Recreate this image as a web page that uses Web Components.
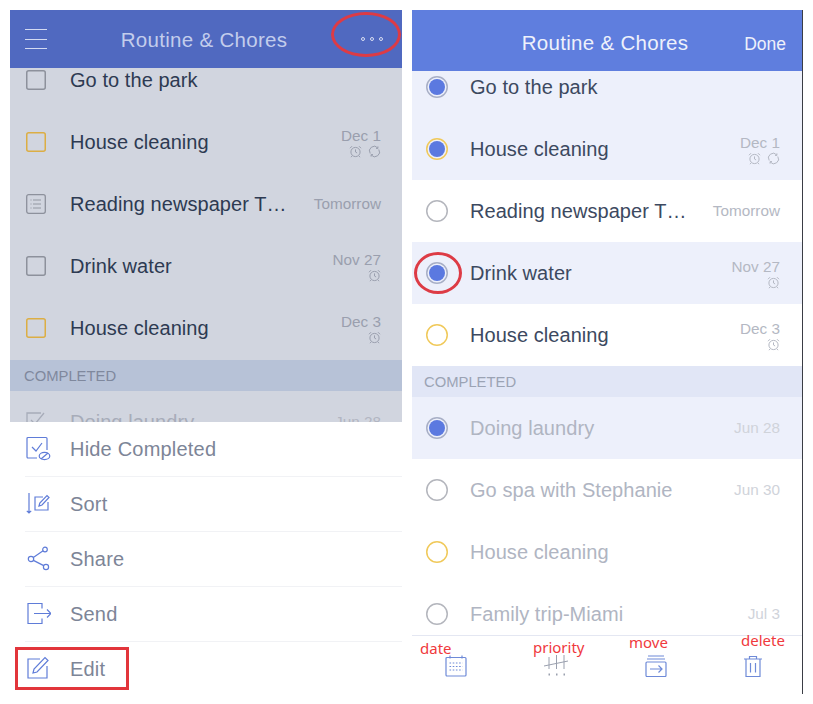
<!DOCTYPE html>
<html>
<head>
<meta charset="utf-8">
<title>Routine &amp; Chores</title>
<style>
  html, body { margin: 0; background: #fff; }
  body { width: 813px; height: 704px; overflow: hidden; font-family: "Liberation Sans", Arial, sans-serif; }
</style>
</head>
<body>
<two-screens>
  <phone-screen slot="left" class="dimmed">
    <nav-bar slot="bar" heading="Routine &amp; Chores" tall="58" drop="2" tone="#5069c0" title-color="#c3cdec">
      <menu-lines slot="start"></menu-lines>
      <more-dots slot="end"></more-dots>
    </nav-bar>
    <task-list slot="body" offset="-19">
      <task-row mark="box" label="Go to the park"></task-row>
      <task-row mark="box-yellow" label="House cleaning" date="Dec 1" icons="alarm repeat"></task-row>
      <task-row mark="note" label="Reading newspaper T…" date="Tomorrow"></task-row>
      <task-row mark="box" label="Drink water" date="Nov 27" icons="alarm"></task-row>
      <task-row mark="box-yellow" label="House cleaning" date="Dec 3" icons="alarm"></task-row>
      <section-head>COMPLETED</section-head>
      <task-row mark="check" faded label="Doing laundry" date="Jun 28"></task-row>
    </task-list>
    <action-sheet slot="foot">
      <sheet-item icon="hide">Hide Completed</sheet-item>
      <sheet-item icon="sort">Sort</sheet-item>
      <sheet-item icon="share">Share</sheet-item>
      <sheet-item icon="send">Send</sheet-item>
      <sheet-item icon="edit" last>Edit</sheet-item>
    </action-sheet>
    <red-mark slot="over" shape="ellipse" x="321" y="2" w="70" h="45"></red-mark>
    <red-mark slot="over" shape="rect" x="5" y="637" w="114" h="43"></red-mark>
  </phone-screen>

  <phone-screen slot="right" class="edit">
    <nav-bar slot="bar" heading="Routine &amp; Chores" tall="61" drop="5" tone="#5f7ede" title-color="#eef1fb">
      <span slot="start"></span>
      <done-link slot="end">Done</done-link>
    </nav-bar>
    <task-list slot="body" offset="-15">
      <task-row mark="dot" picked label="Go to the park"></task-row>
      <task-row mark="dot-yellow" picked label="House cleaning" date="Dec 1" icons="alarm repeat"></task-row>
      <task-row mark="ring" label="Reading newspaper T…" date="Tomorrow"></task-row>
      <task-row mark="dot" picked label="Drink water" date="Nov 27" icons="alarm"></task-row>
      <task-row mark="ring-yellow" label="House cleaning" date="Dec 3" icons="alarm"></task-row>
      <section-head>COMPLETED</section-head>
      <task-row mark="dot" picked faded label="Doing laundry" date="Jun 28"></task-row>
      <task-row mark="ring" faded label="Go spa with Stephanie" date="Jun 30"></task-row>
      <task-row mark="ring-yellow" faded label="House cleaning"></task-row>
      <task-row mark="ring" faded label="Family trip-Miami" date="Jul 3"></task-row>
    </task-list>
    <tool-bar slot="foot">
      <tool-item icon="calendar" note="date" dx="-25" dy="-16"></tool-item>
      <tool-item icon="priority" note="priority" dx="-10" dy="-17"></tool-item>
      <tool-item icon="move" note="move" dx="-16" dy="-22"></tool-item>
      <tool-item icon="trash" note="delete" dx="-2" dy="-24"></tool-item>
    </tool-bar>
    <red-mark slot="over" shape="ellipse" x="2" y="242" w="48" h="42"></red-mark>
  </phone-screen>
</two-screens>

<script>
// Iconos de la pantalla, todos dibujados a mano con trazos finos
const ICONS = {
  alarm: `<svg width="13" height="13" viewBox="0 0 13 13" fill="none" stroke="currentColor" stroke-width="1"><circle cx="6.5" cy="7" r="4.6"/><path d="M6.5 4.4V7l1.6 1M1 3.2 3 1.2M12 3.2 10 1.2M3 11 2 12.2M10 11l1 1.2"/></svg>`,
  repeat: `<svg width="13" height="13" viewBox="0 0 13 13" fill="none" stroke="currentColor" stroke-width="1"><path d="M2.200 8.500A4.700 4.700 0 0 1 9.800 3M10.800 4.500A4.700 4.700 0 0 1 3.200 10"/><path d="M9.900 1.400v2H8M3.100 11.600v-2H5"/></svg>`,
  hide: `<svg width="26" height="26" viewBox="0 0 26 26" fill="none" stroke="currentColor" stroke-width="1.2"><path d="M12 22H3a1 1 0 0 1-1-1V2.500a1 1 0 0 1 1-1h18a1 1 0 0 1 1 1V14"/><path d="m7 11 4 4 6-8"/><ellipse cx="19.500" cy="20" rx="5.300" ry="3.600"/><path d="m16 23 7-6"/></svg>`,
  sort: `<svg width="26" height="26" viewBox="0 0 26 26" fill="none" stroke="currentColor" stroke-width="1.2"><path d="M4 2v20M1.800 19.800 4 22l2.200-2.200"/><path d="M18 6h-8v13h13v-8"/><path d="m14 15 .8-3L22 4.500l2 2-7 7.500z"/></svg>`,
  share: `<svg width="26" height="26" viewBox="0 0 26 26" fill="none" stroke="currentColor" stroke-width="1.2"><circle cx="6" cy="13" r="2.700"/><circle cx="20" cy="3.500" r="2.300"/><circle cx="21" cy="21" r="2.600"/><path d="m8.300 11.500 9.800-6.700M8.400 14.400l10.300 5.200"/></svg>`,
  send: `<svg width="26" height="26" viewBox="0 0 26 26" fill="none" stroke="currentColor" stroke-width="1.2"><path d="M17 7.500V2.500H3v20h14v-5"/><path d="M9 12.500h17M22 8.500l4 4-4 4"/></svg>`,
  edit: `<svg width="26" height="26" viewBox="0 0 26 26" fill="none" stroke="currentColor" stroke-width="1.2"><path d="M15 3H3v19h19V10"/><path d="m8 17 1-4L20 1.500l3 3L12 16z"/></svg>`,
  calendar: `<svg width="22" height="22" viewBox="0 0 22 22" fill="none" stroke="currentColor" stroke-width="1.200"><rect x="1" y="2.500" width="20" height="18.500" rx="1"/><path d="M5 .500v3M17 .500v3"/><path stroke-dasharray="1.600 1.600" d="M4.500 8h13M4.500 11.500h13M4.500 15h13"/></svg>`,
  priority: `<svg width="26" height="22" viewBox="0 0 26 22" fill="none" stroke="#9aa0ae" stroke-width="1"><path d="M1 11 25 6"/><path d="M6 2v12M13.500 0v14M21 0v14"/><path stroke-dasharray="1.500 6" stroke-width="2" d="M5.500 19.500h18"/></svg>`,
  move: `<svg width="22" height="22" viewBox="0 0 22 22" fill="none" stroke="currentColor" stroke-width="1.200"><rect x="1" y="7" width="20" height="14.500" rx="1"/><path d="M3 1h16M2 4h18"/><path d="M5 14h12M13.500 10.500 17 14l-3.500 3.500"/></svg>`,
  trash: `<svg width="20" height="22" viewBox="0 0 20 22" fill="none" stroke="currentColor" stroke-width="1.200"><path d="M1 4h18M3 4v17.500h14V4M6.500 4V1.500h7V4M7.500 8v9.500M12.500 8v9.500"/></svg>`
};

class TwoScreens extends HTMLElement {
  constructor() {
    super();
    this.attachShadow({ mode: "open" }).innerHTML = `
      <style>
        :host { display: flex; gap: 10px; padding: 10px 0 0 10px; height: 694px; box-sizing: content-box; }
        ::slotted([slot="left"]) { width: 392px; height: 694px; }
        ::slotted([slot="right"]) { width: 390px; height: 684px; border-right: 1px solid #3a3d45; }
      </style>
      <slot name="left"></slot><slot name="right"></slot>`;
  }
}

class PhoneScreen extends HTMLElement {
  constructor() {
    super();
    this.attachShadow({ mode: "open" }).innerHTML = `
      <style>
        :host { display: flex; flex-direction: column; position: relative; }
        :host(.dimmed) {
          --row-bg: #d1d5df; --row-picked: #d1d5df; --head-bg: #b7c2d7; --head-ink: #7f889d;
          --ink: #2d3a52; --ink-faded: #a7acb9; --date: #9a9fae; --date-faded: #b2b6c2;
          --head-gap: 1px; --head-pad: 14px; --box-yellow: #dcae44;
        }
        :host(.edit) {
          --row-bg: #ffffff; --row-picked: #edf0fb; --head-bg: #e1e6f6; --head-ink: #9ba3b4;
          --ink: #3c4960; --ink-faded: #b0b5c2; --date: #b4b8c3; --date-faded: #d0d3da;
          --head-gap: 0; --head-pad: 12px;
        }
      </style>
      <slot name="bar"></slot><slot name="body"></slot><slot name="foot"></slot><slot name="over"></slot>`;
  }
}

class NavBar extends HTMLElement {
  constructor() {
    super();
    this.attachShadow({ mode: "open" });
  }
  connectedCallback() {
    this.shadowRoot.innerHTML = `
      <style>
        :host {
          display: grid; grid-template-columns: 1fr auto 1fr; align-items: center; flex: none;
          height: ${this.getAttribute("tall")}px; padding: 0 16px 0 15px; box-sizing: border-box;
          background: ${this.getAttribute("tone")}; position: relative; z-index: 1;
        }
        h1 { margin: ${this.getAttribute("drop")}px 3px 0 0; font: 400 20.5px "Liberation Sans", Arial, sans-serif; letter-spacing: .3px;
             color: ${this.getAttribute("title-color")}; white-space: nowrap; }
        .end { justify-self: end; }
      </style>
      <div><slot name="start"></slot></div>
      <h1>${this.getAttribute("heading").replace("&", "&amp;")}</h1>
      <div class="end"><slot name="end"></slot></div>`;
  }
}

class MenuLines extends HTMLElement {
  constructor() {
    super();
    this.attachShadow({ mode: "open" }).innerHTML = `
      <style>
        :host { display: flex; flex-direction: column; gap: 8.500px; width: 22px; }
        i { display: block; height: 1px; background: #d3daf2; }
      </style>
      <i></i><i></i><i></i>`;
  }
}

class MoreDots extends HTMLElement {
  constructor() {
    super();
    this.attachShadow({ mode: "open" }).innerHTML = `
      <style>
        :host { display: flex; gap: 4.500px; margin-right: 3px; align-items: center; }
        i { width: 2.500px; height: 2.500px; border: 1px solid #d9def2; border-radius: 50%; box-sizing: content-box; }
      </style>
      <i></i><i></i><i></i>`;
  }
}

class DoneLink extends HTMLElement {
  constructor() {
    super();
    this.attachShadow({ mode: "open" }).innerHTML = `
      <style>:host { display: block; font-size: 17.500px; color: #eef1fb; margin-top: 7px; }</style><slot></slot>`;
  }
}

class TaskList extends HTMLElement {
  constructor() {
    super();
    this.attachShadow({ mode: "open" });
  }
  connectedCallback() {
    this.shadowRoot.innerHTML = `
      <style>
        :host { display: block; flex: 1; min-height: 0; overflow: hidden; background: var(--row-bg); }
        .inner { margin-top: ${this.getAttribute("offset")}px; }
      </style>
      <div class="inner"><slot></slot></div>`;
  }
}

class SectionHead extends HTMLElement {
  constructor() {
    super();
    this.attachShadow({ mode: "open" }).innerHTML = `
      <style>
        :host { display: flex; align-items: center; height: 31px; margin-top: var(--head-gap); padding: 0 var(--head-pad); box-sizing: border-box;
                background: var(--head-bg); color: var(--head-ink); font-size: 14.800px; }
      </style>
      <slot></slot>`;
  }
}

class TaskRow extends HTMLElement {
  constructor() {
    super();
    this.attachShadow({ mode: "open" });
  }

  // Dibujo la marca de la izquierda según el atributo mark
  markHtml(mark) {
    const yellow = mark.endsWith("yellow");
    if (mark.startsWith("box")) {
      const color = yellow ? "#dcae44" : "#8d919c";
      return `<svg width="20" height="20" viewBox="0 0 20 20" fill="none" stroke="${color}" stroke-width="1.500"><rect x=".75" y=".75" width="18.500" height="18.500" rx="2"/></svg>`;
    }
    if (mark === "note") {
      return `<svg width="20" height="20" viewBox="0 0 20 20" fill="none" stroke="#8d919c"><rect x=".7" y=".7" width="18.600" height="18.600" rx="2" stroke-width="1.300"/><path d="M7 6h8M7 10h8M7 14h8M4.500 6h1M4.500 10h1M4.500 14h1" stroke-width=".9"/></svg>`;
    }
    if (mark === "check") {
      return `<svg width="20" height="20" viewBox="0 0 20 20" fill="none" stroke="#a7acb9" stroke-width="1.300"><path d="M15 1H1v18h18v-9M5 8l4 4 9-11"/></svg>`;
    }
    const ring = yellow ? "#f0c95a" : (this.hasAttribute("picked") ? "#a8afc6" : "#b4b6bd");
    const dot = mark.startsWith("dot") ? `<circle cx="11" cy="11" r="8" fill="#5b79e0" stroke="none"/>` : "";
    return `<svg width="22" height="22" viewBox="0 0 22 22" fill="none" stroke="${ring}" stroke-width="1.500"><circle cx="11" cy="11" r="10.250"/>${dot}</svg>`;
  }

  connectedCallback() {
    const label = this.getAttribute("label");
    const date = this.getAttribute("date");
    const mark = this.getAttribute("mark");
    const round = mark.startsWith("dot") || mark.startsWith("ring");
    const icons = (this.getAttribute("icons") || "").split(" ").filter(Boolean);
    this.shadowRoot.innerHTML = `
      <style>
        :host {
          display: flex; align-items: center; height: 62px; box-sizing: border-box;
          padding: 0 ${round ? 22 : 21}px 0 ${round ? 14 : 16}px;
          background: var(--row-bg); color: var(--ink); font-size: 20px;
        }
        :host([picked]) { background: var(--row-picked); }
        :host([faded]) { color: var(--ink-faded); --date: var(--date-faded); }
        .mark { flex: none; width: 44px; display: flex; align-items: center; }
        .mark svg { display: block; }
        .label { flex: 1; white-space: nowrap; letter-spacing: .06px; }
        .meta { text-align: right; color: var(--date); font-size: 15.300px; }
        .icons { display: flex; justify-content: flex-end; gap: 6px; height: 13px; margin-top: 0; }
        .icons svg { display: block; }
      </style>
      <span class="mark">${this.markHtml(mark)}</span>
      <span class="label">${label}</span>
      <span class="meta">
        ${date ? `<div>${date}</div>` : ""}
        ${icons.length ? `<div class="icons">${icons.map(n => ICONS[n]).join("")}</div>` : ""}
      </span>`;
  }
}

class ActionSheet extends HTMLElement {
  constructor() {
    super();
    this.attachShadow({ mode: "open" }).innerHTML = `
      <style>:host { display: block; flex: none; height: 282px; background: #fff; }</style><slot></slot>`;
  }
}

class SheetItem extends HTMLElement {
  constructor() {
    super();
    this.attachShadow({ mode: "open" });
  }
  connectedCallback() {
    this.shadowRoot.innerHTML = `
      <style>
        :host { display: block; padding-left: 15px; }
        .in { display: flex; align-items: center; height: 54px; box-sizing: content-box;
              border-bottom: 1px solid #f1f2f5; color: #7d8597; font-size: 20px; letter-spacing: .2px; }
        :host([last]) .in { border-bottom: 0; }
        .ic { width: 45px; color: #5f7cd8; display: flex; }
      </style>
      <div class="in"><span class="ic">${ICONS[this.getAttribute("icon")]}</span><slot></slot></div>`;
  }
}

class ToolBar extends HTMLElement {
  constructor() {
    super();
    this.attachShadow({ mode: "open" }).innerHTML = `
      <style>
        :host { display: flex; flex: none; height: 59px; box-sizing: border-box; justify-content: space-between;
                padding: 19px 39px 0 33px; background: #fff; border-top: 1px solid #e4e7f2; }
      </style>
      <slot></slot>`;
  }
}

class ToolItem extends HTMLElement {
  constructor() {
    super();
    this.attachShadow({ mode: "open" });
  }
  connectedCallback() {
    this.shadowRoot.innerHTML = `
      <style>
        :host { display: block; position: relative; color: #6e8ad8; height: 22px; }
        svg { display: block; }
        .note { position: absolute; left: ${this.getAttribute("dx")}px; top: ${this.getAttribute("dy")}px;
                color: #f0393d; font: 15px/18px "Noto Sans", sans-serif; white-space: nowrap; }
      </style>
      ${ICONS[this.getAttribute("icon")]}
      <span class="note">${this.getAttribute("note")}</span>`;
  }
}

// Anotaciones rojas encima de la captura
class RedMark extends HTMLElement {
  constructor() {
    super();
    this.attachShadow({ mode: "open" });
  }
  connectedCallback() {
    const round = this.getAttribute("shape") === "ellipse";
    this.shadowRoot.innerHTML = `
      <style>
        :host {
          position: absolute; z-index: 2; box-sizing: border-box;
          left: ${this.getAttribute("x")}px; top: ${this.getAttribute("y")}px;
          width: ${this.getAttribute("w")}px; height: ${this.getAttribute("h")}px;
          border: 3px solid ${round ? "#dd3b45" : "#e2353b"};
          border-radius: ${round ? "50%" : "0"};
        }
      </style>`;
  }
}

customElements.define("two-screens", TwoScreens);
customElements.define("phone-screen", PhoneScreen);
customElements.define("nav-bar", NavBar);
customElements.define("menu-lines", MenuLines);
customElements.define("more-dots", MoreDots);
customElements.define("done-link", DoneLink);
customElements.define("task-list", TaskList);
customElements.define("section-head", SectionHead);
customElements.define("task-row", TaskRow);
customElements.define("action-sheet", ActionSheet);
customElements.define("sheet-item", SheetItem);
customElements.define("tool-bar", ToolBar);
customElements.define("tool-item", ToolItem);
customElements.define("red-mark", RedMark);
</script>
</body>
</html>
